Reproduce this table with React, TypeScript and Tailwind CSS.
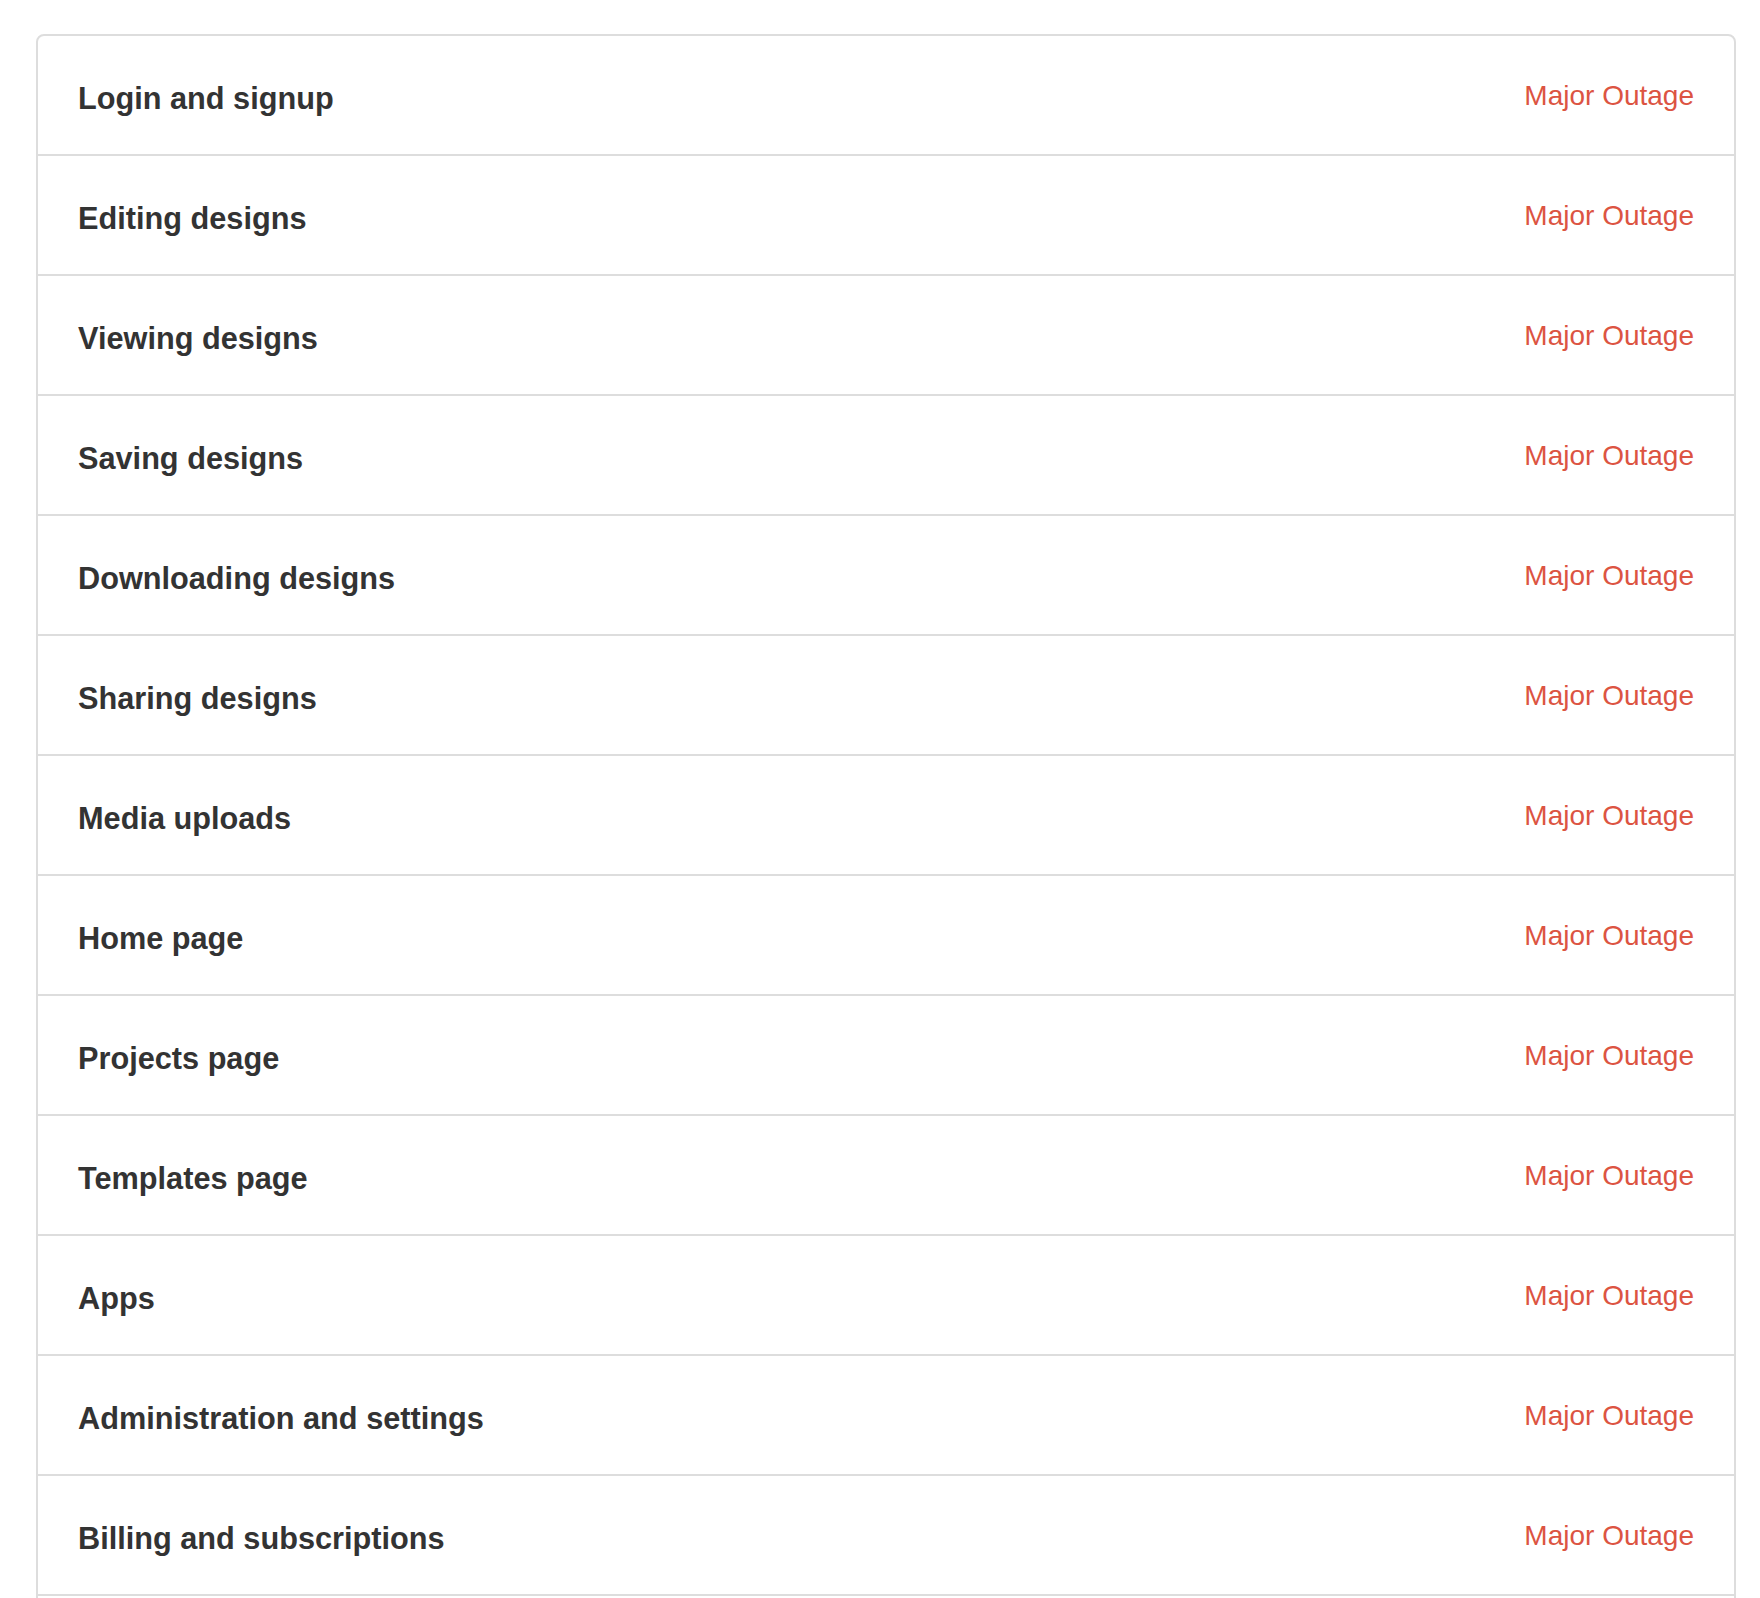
const COMPONENTS = [
  "Login and signup",
  "Editing designs",
  "Viewing designs",
  "Saving designs",
  "Downloading designs",
  "Sharing designs",
  "Media uploads",
  "Home page",
  "Projects page",
  "Templates page",
  "Apps",
  "Administration and settings",
  "Billing and subscriptions",
];

export default function App() {
  return (
    <div className="min-h-screen bg-white font-['Liberation_Sans',Arial,sans-serif] pt-[34px] pl-[36px]">
      <div className="w-[1700px] border-2 border-[#dddddd] rounded-t-[8px] pb-[80px]">
        {COMPONENTS.map((name) => (
          <div
            key={name}
            className="flex items-start justify-between border-b-2 border-[#dddddd] px-[40px] pt-[44px] pb-[38px]"
          >
            <span className="mt-[2px] text-[30.7px] leading-[34px] font-bold text-[#333333]">
              {name}
            </span>
            <span className="text-[28px] leading-[32px] text-[#dc5442]">Major Outage</span>
          </div>
        ))}
      </div>
    </div>
  );
}
